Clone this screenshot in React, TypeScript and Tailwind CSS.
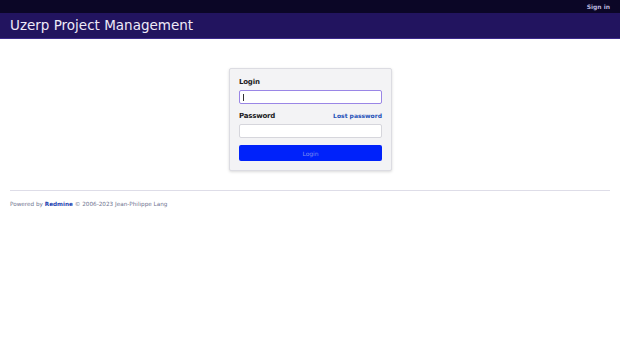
export default function App() {
  return (
    <div className="min-h-[343px] bg-white font-['DejaVu_Sans',sans-serif]">
      {/* Top menu */}
      <div className="flex h-[13px] items-center justify-end bg-[#0b0626] pr-[10px]">
        <span className="text-[6px] font-semibold text-[#b9b3dc]">Sign in</span>
      </div>

      {/* Header */}
      <div className="flex h-[26px] items-center border-b border-[#3d2a8c] bg-[#22145f] pl-[10px]">
        <h1 className="text-[13.5px] leading-none text-[#eeeaf8]">Uzerp Project Management</h1>
      </div>

      {/* Login form */}
      <div className="flex justify-center pt-[29px]">
        <div className="ml-[1px] w-[163px] rounded-[2px] border border-[#dcdce2] bg-[#f3f3f5] px-[9px] pb-[9px] pt-[9px] shadow-[0_1px_3px_rgba(0,0,0,0.15)]">
          <label className="block text-[7px] font-bold leading-[8px] tracking-[-0.2px] text-[#1a1a22]">Login</label>
          <div className="mt-[4px] flex h-[14px] items-center rounded-[2px] border-[1.5px] border-[#9a86e6] bg-white pl-[3px]">
            <span className="h-[7px] w-px bg-[#333]" />
          </div>
          <div className="mt-[8px] flex items-center justify-between">
            <label className="text-[7px] font-bold leading-[8px] tracking-[-0.2px] text-[#1a1a22]">Password</label>
            <span className="text-[6px] font-bold leading-[8px] text-[#2450b8]">Lost password</span>
          </div>
          <div className="mt-[4px] h-[14px] rounded-[2px] border border-[#d6d6dc] bg-white" />
          <button className="mt-[7px] flex h-[16px] w-full items-center justify-center rounded-[2px] bg-[#0022fa] text-[6px] text-[#7f8cf0]">
            Login
          </button>
        </div>
      </div>

      {/* Footer */}
      <div className="mx-[10px] mt-[19px] border-t border-[#dedde8] pt-[10px]">
        <p className="text-[5.7px] leading-[7px] text-[#707590]">
          Powered by <span className="font-bold text-[#1c3fb0]">Redmine</span> © 2006-2023 Jean-Philippe Lang
        </p>
      </div>
    </div>
  )
}
